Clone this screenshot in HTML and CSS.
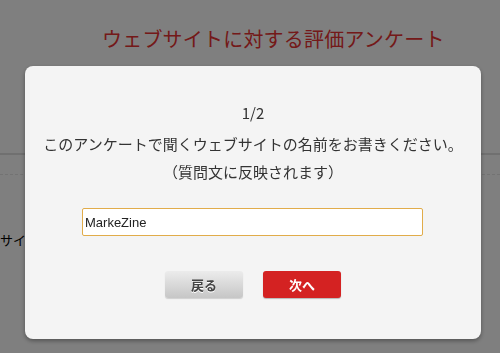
FILE: index.html
```html
<!DOCTYPE html>
<html>
<head>
	<meta charset="utf-8">
	<title>ウェブサイトに対する評価アンケート</title>
	<link rel="stylesheet" href="styles.css">
</head>
<body>
<div class="page">
	<h1 class="title">ウェブサイトに対する評価アンケート</h1>
	<div class="rule"></div>
	<div class="dashed"></div>
	<div class="label">サイト名</div>
</div>

<div class="overlay">
	<div class="dialog">
		<p class="step">1/2</p>
		<p class="question">このアンケートで聞くウェブサイトの名前をお書きください。</p>
		<p class="note">（質問文に反映されます）</p>
		<input class="answer" type="text" value="MarkeZine">
		<div class="buttons">
			<a class="btn back">戻る</a>
			<a class="btn next">次へ</a>
		</div>
	</div>
</div>
</body>
</html>
```

FILE: styles.css
```css
html,body{
	margin: 0;
	padding: 0;
	height: 100%;
	overflow: hidden;
}
body{
	background: #fff;
	font-family: "Noto Sans CJK JP", "Liberation Sans", sans-serif;
	color: #333;
}
.page{
	padding-top: 24px;
}
.title{
	margin: 0 0 0 102px;
	font-size: 20px;
	font-weight: normal;
	line-height: 30px;
	color: #e83232;
	letter-spacing: 0.2px;
}
.rule{
	margin-top: 99px;
	height: 2px;
	background: #e0e0e0;
}
.dashed{
	margin-top: 19px;
	border-top: 1px dashed #e6e6e6;
}
.label{
	margin-top: 55px;
	font-size: 13px;
	color: #000;
}

.overlay{
	position: fixed;
	top: 0;
	left: 0;
	right: 0;
	bottom: 0;
	background: rgba(0,0,0,0.5);
}
.dialog{
	position: absolute;
	top: 66px;
	left: 25px;
	width: 456px;
	height: 273px;
	box-sizing: border-box;
	padding-top: 33px;
	background: #f4f4f4;
	border-radius: 8px;
	box-shadow: 0 2px 4px rgba(0,0,0,0.35);
	text-align: center;
}
.dialog p{
	margin: 0;
	font-size: 15px;
	line-height: 28px;
	color: #333;
}
.step{
	margin-bottom: 3px !important;
}
.answer{
	display: block;
	box-sizing: border-box;
	width: 341px;
	height: 28px;
	margin: 22px 0 0 57px;
	padding: 0 2px;
	border: 1px solid #e1ac4a;
	border-radius: 2px;
	background: #fff;
	font-family: "Liberation Sans", Arial, sans-serif;
	font-size: 13px;
	color: #222;
	outline: none;
}
.buttons{
	display: flex;
	justify-content: center;
	gap: 20px;
	margin-top: 35px;
}
.btn{
	display: block;
	width: 78px;
	height: 27px;
	line-height: 27px;
	border-radius: 3px;
	font-size: 13px;
	font-weight: bold;
	cursor: pointer;
}
.back{
	background: linear-gradient(#ececec, #c6c6c6);
	color: #444;
	text-shadow: 0 1px 0 #fff;
	box-shadow: 0 1px 1px rgba(0,0,0,0.15);
}
.next{
	background: #d42222;
	color: #fff;
	box-shadow: 0 1px 1px rgba(0,0,0,0.25);
}
```
